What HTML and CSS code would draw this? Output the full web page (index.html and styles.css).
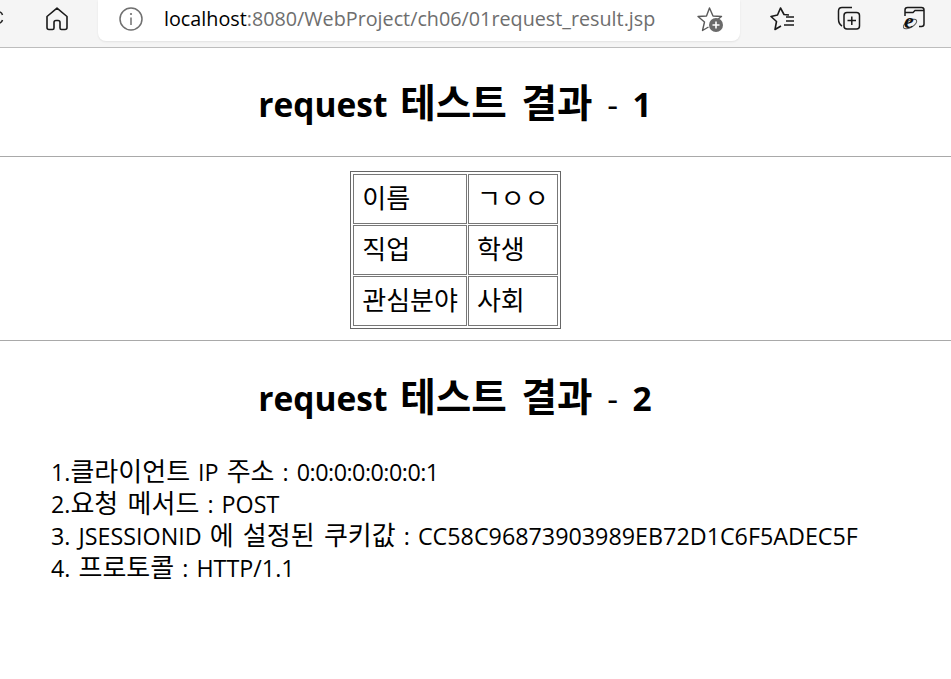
FILE: index.html
```html
<!DOCTYPE html>
<html lang="ko">
<head>
    <meta charset="UTF-8">
    <meta name="viewport" content="width=device-width, initial-scale=1.0">
    <title>request 테스트 결과</title>
    <link rel="stylesheet" href="styles.css">
</head>
<body>
    <!-- 브라우저 도구 모음 -->
    <div class="toolbar">
        <div class="nav-left">
            <svg class="edge-mark" width="4" height="20" viewBox="0 0 4 20"><path d="M0 3 Q2 4 2.5 6 M2.5 11 Q2 13 0 14" fill="none" stroke="#222" stroke-width="1.5"/></svg>
            <svg class="icon-home" width="24" height="24" viewBox="0 0 24 24"><path d="M12 1.2 L2 9.5 V20.5 Q2 22.5 4 22.5 H7.5 Q9 22.5 9 21 V15.5 Q9 13.5 11 13.5 H13 Q15 13.5 15 15.5 V21 Q15 22.5 16.5 22.5 H20 Q22 22.5 22 20.5 V9.5 Z" fill="none" stroke="#1a1a1a" stroke-width="1.6" stroke-linejoin="round"/></svg>
        </div>
        <div class="address-bar">
            <svg class="icon-info" width="24" height="24" viewBox="0 0 24 24"><circle cx="12" cy="12" r="11" fill="none" stroke="#707070" stroke-width="1.5"/><path d="M12 10.5 V18" stroke="#707070" stroke-width="1.5"/><circle cx="12" cy="7" r="1.1" fill="#707070"/></svg>
            <span class="url"><span class="host">localhost</span>:8080/WebProject/ch06/01request_result.jsp</span>
            <svg class="icon-fav" width="28" height="26" viewBox="0 0 28 26"><path d="M18 14.5 L24.5 9.5 L16 9 L12.5 1 L9.5 9 L1 9.5 L7.5 15 L5.5 23.5 L11.5 20" fill="none" stroke="#5a5a5a" stroke-width="1.4" stroke-linejoin="round"/><circle cx="19" cy="18" r="7" fill="#6a6a6a"/><path d="M15.5 18 H22.5 M19 14.5 V21.5" stroke="#fff" stroke-width="1.6"/></svg>
        </div>
        <div class="nav-right">
            <svg width="26" height="24" viewBox="0 0 26 24"><path d="M19 8 L14 7.5 L10.5 1 L7.5 8 L1 9.5 L6.5 14.5 L5 22.5 L11 19" fill="none" stroke="#1a1a1a" stroke-width="1.6" stroke-linejoin="round"/><path d="M16 10 H24 M16 14 H24 M14 18 H24" stroke="#1a1a1a" stroke-width="1.4"/></svg>
            <svg width="24" height="25" viewBox="0 0 24 25"><path d="M15 1.5 H5 Q1.5 1.5 1.5 5 V13 Q1.5 18 5 20" fill="none" stroke="#1a1a1a" stroke-width="1.5"/><rect x="7" y="6.5" width="15.5" height="16.5" rx="3" fill="none" stroke="#1a1a1a" stroke-width="1.5"/><path d="M10.5 14.5 H19 M14.8 10.5 V19" stroke="#1a1a1a" stroke-width="1.5"/></svg>
            <svg class="icon-ie" width="24" height="25" viewBox="0 0 24 25"><path d="M3 10 V4 Q3 1.5 5.5 1.5 H19.5 Q22 1.5 22 4 V18 Q22 20.5 19.5 20.5 H17" fill="none" stroke="#1a1a1a" stroke-width="1.5"/><path d="M3 6.5 H11 L13 4.5 H22" fill="none" stroke="#1a1a1a" stroke-width="1.4"/><ellipse cx="8" cy="18" rx="7.5" ry="3.5" transform="rotate(-30 8 18)" fill="none" stroke="#555" stroke-width="1"/><text class="ie-letter" x="2" y="22">e</text></svg>
        </div>
    </div>

    <h1><span class="en">request</span> <span class="ko">테스트 결과</span> <span class="dash">-</span> <span class="en">1</span></h1>
    <hr>
    <table class="result-table">
        <tr><td class="ko">이름</td><td class="ko">ㄱㅇㅇ</td></tr>
        <tr><td class="ko">직업</td><td class="ko">학생</td></tr>
        <tr><td class="ko">관심분야</td><td class="ko">사회</td></tr>
    </table>
    <hr>
    <h1 class="title-second"><span class="en">request</span> <span class="ko">테스트 결과</span> <span class="dash">-</span> <span class="en">2</span></h1>
    <div class="info-list">
        1.<span class="ko">클라이언트</span> IP <span class="ko">주소</span> : <span class="ip-addr">0:0:0:0:0:0:0:1</span><br>
        2.<span class="ko">요청 메서드</span> : POST<br>
        3. JSESSIONID <span class="ko">에 설정된 쿠키값</span> : CC58C96873903989EB72D1C6F5ADEC5F<br>
        4. <span class="ko">프로토콜</span> : HTTP/1.1
    </div>
</body>
</html>
```

FILE: styles.css
```css
body {
    font-family: "Open Sans", "Noto Sans CJK KR", sans-serif;
    font-size: 23.3px;
    line-height: 32px;
    word-spacing: 2px;
    margin: 0;
    padding: 0;
    color: #000;
    background: #fff;
}
.ko {
    font-family: "Noto Sans CJK KR", sans-serif;
    font-size: 26px;
}
span.ko {
    line-height: 0;
}
.toolbar {
    display: flex;
    align-items: flex-start;
    height: 47px;
    background: #f5f5f5;
    border-bottom: 1px solid #bdbdbd;
}
.nav-left {
    display: flex;
    align-items: center;
    width: 98px;
    height: 37px;
    flex-shrink: 0;
}
.icon-home {
    margin-left: 41px;
}
.address-bar {
    display: flex;
    align-items: center;
    width: 642px;
    height: 41px;
    background: #fff;
    border-radius: 0 0 8px 8px;
    box-shadow: 0 1px 2px rgba(0, 0, 0, 0.08);
    box-sizing: border-box;
    padding: 0 15px 4px 21px;
}
.url {
    font-size: 19.76px;
    word-spacing: 0;
    color: #6e6e6e;
    margin-left: 21px;
    white-space: nowrap;
    flex: 1;
}
.host {
    color: #000;
}
.icon-fav {
    margin-top: 2px;
}
.nav-right {
    display: flex;
    align-items: center;
    gap: 41px;
    height: 37px;
    padding-left: 30px;
}
.icon-ie {
    overflow: visible;
}
.ie-letter {
    font-family: "Liberation Serif", serif;
    font-size: 22px;
    font-weight: bold;
    font-style: italic;
    fill: #111;
}
h1 {
    font-size: 33.5px;
    line-height: 48px;
    font-weight: bold;
    text-align: center;
    margin: 32px 41px 28px 0;
    word-spacing: 4px;
}
h1 span.ko {
    font-size: 38.6px;
}
.dash {
    font-weight: normal;
    margin: 0 2px;
}
.title-second {
    margin: 33px 41px 34px 0;
}
hr {
    border: 0;
    border-top: 1px solid #a9a9a9;
    margin: 0;
}
.result-table {
    border: 1px solid #666;
    padding: 1px;
    border-spacing: 1px;
    margin: 14px auto 11px;
    position: relative;
    left: -20px;
}
.result-table td {
    border: 1px solid #777;
    padding: 6px 8px 10px;
}
.info-list {
    margin: 0 0 0 51px;
}
.ip-addr {
    letter-spacing: -0.5px;
}
```
